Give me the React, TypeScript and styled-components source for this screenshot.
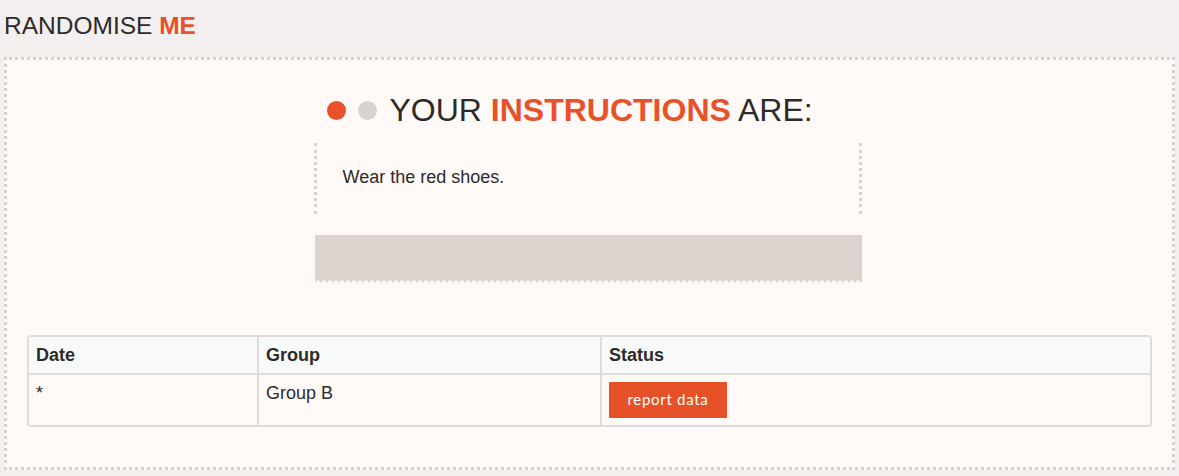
import React from "react";
import styled, { createGlobalStyle } from "styled-components";

const ORANGE = "#e8522a";
const TEXT = "#2d2b2a";
const PAPER = "#fffaf7";

const Global = createGlobalStyle`
  html, body {
    margin: 0;
    padding: 0;
    background: #f2efee;
    font-family: "Liberation Sans", Arial, sans-serif;
    color: ${TEXT};
  }
  * { box-sizing: border-box; }
`;

const Page = styled.div`
  padding: 12px 4px 6px 4px;
`;

const SiteTitle = styled.h1`
  margin: 0 0 17px 0;
  padding-left: 0;
  font-size: 24.5px;
  line-height: 28px;
  font-weight: 400;
  color: ${TEXT};
`;

const Accent = styled.span`
  color: ${ORANGE};
  font-weight: 700;
`;

const Frame = styled.section`
  border: 3px dotted #d6d1cd;
  background: ${PAPER};
  padding: 30px 20px 40px 20px;
`;

const Column = styled.div`
  width: 548px;
  margin: 0 auto;
  position: relative;
  left: -2px;
`;

const HeadingRow = styled.div`
  display: flex;
  align-items: center;
  padding-left: 13px;
  height: 40px;
`;

const Dot = styled.span<{ $active?: boolean }>`
  width: 19px;
  height: 19px;
  border-radius: 50%;
  background: ${(p) => (p.$active ? ORANGE : "#d8d3d0")};
  margin-right: 12px;
  flex: none;
`;

const Heading = styled.h2`
  margin: 0 0 0 1px;
  font-size: 32px;
  line-height: 40px;
  font-weight: 400;
  color: ${TEXT};
  white-space: nowrap;
`;

const InstructionBox = styled.div`
  margin-top: 13px;
  border-left: 3px dotted #d6d1cd;
  border-right: 3px dotted #d6d1cd;
  padding: 21px 25px 24px 26px;
  font-size: 18px;
  line-height: 26px;
`;

const TornBar = styled.div`
  margin-top: 21px;
  margin-left: 1px;
  height: 48px;
  background: #dad3ce;
  position: relative;
  &::after {
    content: "";
    position: absolute;
    left: 0;
    right: 0;
    bottom: 0;
    height: 4px;
    background: radial-gradient(circle at 50% 100%, ${PAPER} 2.4px, transparent 2.9px) repeat-x;
    background-size: 6px 4px;
  }
`;

const Table = styled.div`
  margin-top: 52px;
  display: grid;
  grid-template-columns: 228px 343px 1fr;
  border: 2px solid #dedddc;
  border-radius: 4px;
  overflow: hidden;
`;

const Cell = styled.div<{ $head?: boolean; $first?: boolean }>`
  padding: 7px 8px 7px 7px;
  font-size: 18px;
  line-height: 22px;
  font-weight: ${(p) => (p.$head ? 700 : 400)};
  background: ${(p) => (p.$head ? "#f8f9f9" : "transparent")};
  border-left: ${(p) => (p.$first ? "none" : "2px solid #dedddc")};
  border-bottom: ${(p) => (p.$head ? "2px solid #dedddc" : "none")};
  min-height: ${(p) => (p.$head ? "38px" : "50px")};
`;

const ReportButton = styled.button`
  width: 118px;
  height: 36px;
  border: none;
  border-radius: 0;
  background: #e65127;
  color: #fff;
  font-family: Lato, "Noto Sans", sans-serif;
  font-size: 15px;
  letter-spacing: 0.7px;
  padding: 0 0 2px 0;
  cursor: pointer;
  display: block;
`;

export default function App() {
  return (
    <>
      <Global />
      <Page>
        <SiteTitle>
          RANDOMISE <Accent>ME</Accent>
        </SiteTitle>
        <Frame>
          <Column>
            <HeadingRow>
              <Dot $active />
              <Dot />
              <Heading>
                YOUR <Accent>INSTRUCTIONS</Accent> ARE:
              </Heading>
            </HeadingRow>
            <InstructionBox>Wear the red shoes.</InstructionBox>
            <TornBar />
          </Column>
          <Table>
            <Cell $head $first>Date</Cell>
            <Cell $head>Group</Cell>
            <Cell $head>Status</Cell>
            <Cell $first>*</Cell>
            <Cell>Group B</Cell>
            <Cell>
              <ReportButton>report data</ReportButton>
            </Cell>
          </Table>
        </Frame>
      </Page>
    </>
  );
}
